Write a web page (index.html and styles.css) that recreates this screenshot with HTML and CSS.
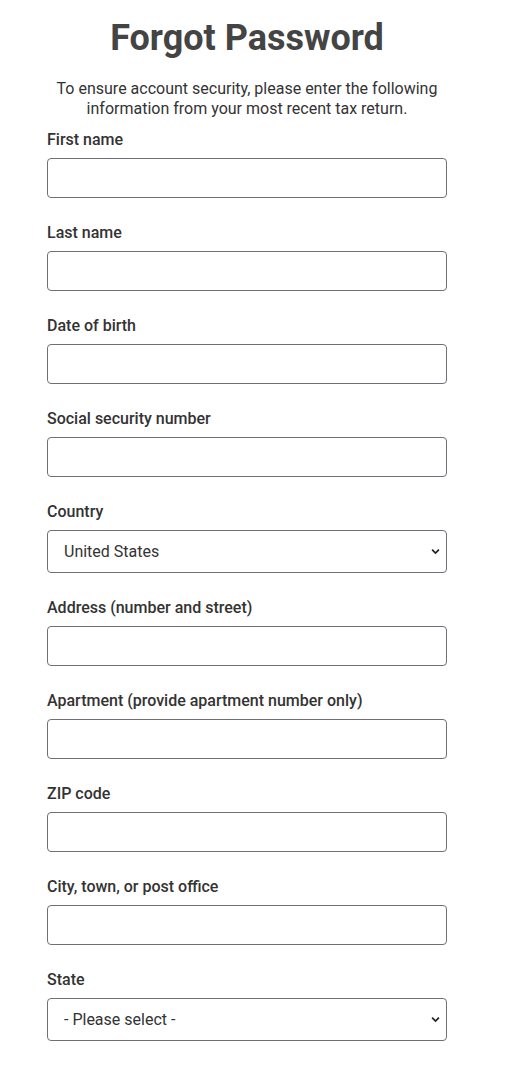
FILE: index.html
```html
<!DOCTYPE html>
<html lang="en">
<head>
<meta charset="utf-8">
<title>Forgot Password</title>
<link rel="stylesheet" href="styles.css">
</head>
<body>
<main class="page">
  <h1 class="title">Forgot Password</h1>
  <p class="intro">To ensure account security, please enter the following information from your most recent tax return.</p>
  <form class="form">
    <div class="field">
      <label class="label" for="first">First name</label>
      <input class="input" id="first" type="text">
    </div>
    <div class="field">
      <label class="label" for="last">Last name</label>
      <input class="input" id="last" type="text">
    </div>
    <div class="field">
      <label class="label" for="dob">Date of birth</label>
      <input class="input" id="dob" type="text">
    </div>
    <div class="field">
      <label class="label" for="ssn">Social security number</label>
      <input class="input" id="ssn" type="text">
    </div>
    <div class="field">
      <label class="label" for="country">Country</label>
      <div class="select-wrap">
        <select class="select" id="country">
          <option>United States</option>
        </select>
        <svg class="chevron" viewBox="0 0 10 7" aria-hidden="true"><path d="M1.2 1.4 L5 5.2 L8.8 1.4" fill="none" stroke="#222" stroke-width="1.9"/></svg>
      </div>
    </div>
    <div class="field">
      <label class="label" for="addr">Address (number and street)</label>
      <input class="input" id="addr" type="text">
    </div>
    <div class="field">
      <label class="label" for="apt">Apartment (provide apartment number only)</label>
      <input class="input" id="apt" type="text">
    </div>
    <div class="field">
      <label class="label" for="zip">ZIP code</label>
      <input class="input" id="zip" type="text">
    </div>
    <div class="field">
      <label class="label" for="city">City, town, or post office</label>
      <input class="input" id="city" type="text">
    </div>
    <div class="field">
      <label class="label" for="state">State</label>
      <div class="select-wrap">
        <select class="select" id="state">
          <option>- Please select -</option>
        </select>
        <svg class="chevron" viewBox="0 0 10 7" aria-hidden="true"><path d="M1.2 1.4 L5 5.2 L8.8 1.4" fill="none" stroke="#222" stroke-width="1.9"/></svg>
      </div>
    </div>
  </form>
</main>
</body>
</html>
```
FILE: styles.css
```css
* { box-sizing: border-box; }
html, body { margin: 0; padding: 0; background: #fff; }
body {
  font-family: Roboto, "Liberation Sans", Arial, sans-serif;
  color: #333;
}
.page {
  width: 400px;
  margin-left: 47px;
  padding-top: 16px;
}
.title {
  margin: 0;
  font-size: 36px;
  line-height: 44px;
  font-weight: 700;
  color: #444;
  text-align: center;
}
.intro {
  margin: 19px 0 0;
  font-size: 16px;
  line-height: 20px;
  text-align: center;
  color: #333;
}
.form {
  display: flex;
  flex-direction: column;
  gap: 24px;
  margin-top: 10px;
}
.field {
  display: flex;
  flex-direction: column;
}
.label {
  font-size: 16px;
  line-height: 20px;
  font-weight: 500;
  color: #333;
  padding-top: 1px;
  margin-bottom: 8px;
}
.input {
  display: block;
  width: 400px;
  height: 40px;
  border: 1px solid #6f6f78;
  border-radius: 4px;
  background: #fff;
  font: inherit;
  padding: 0 16px;
}
.select-wrap {
  position: relative;
}
.select {
  display: block;
  width: 400px;
  height: 43px;
  border: 1px solid #6f6f78;
  border-radius: 4px;
  background: #fff;
  font-family: inherit;
  font-size: 16px;
  color: #333;
  padding: 0 16px;
  -webkit-appearance: none;
  appearance: none;
}
.chevron {
  position: absolute;
  right: 7px;
  top: 18px;
  width: 9px;
  height: 7px;
  pointer-events: none;
}
```
